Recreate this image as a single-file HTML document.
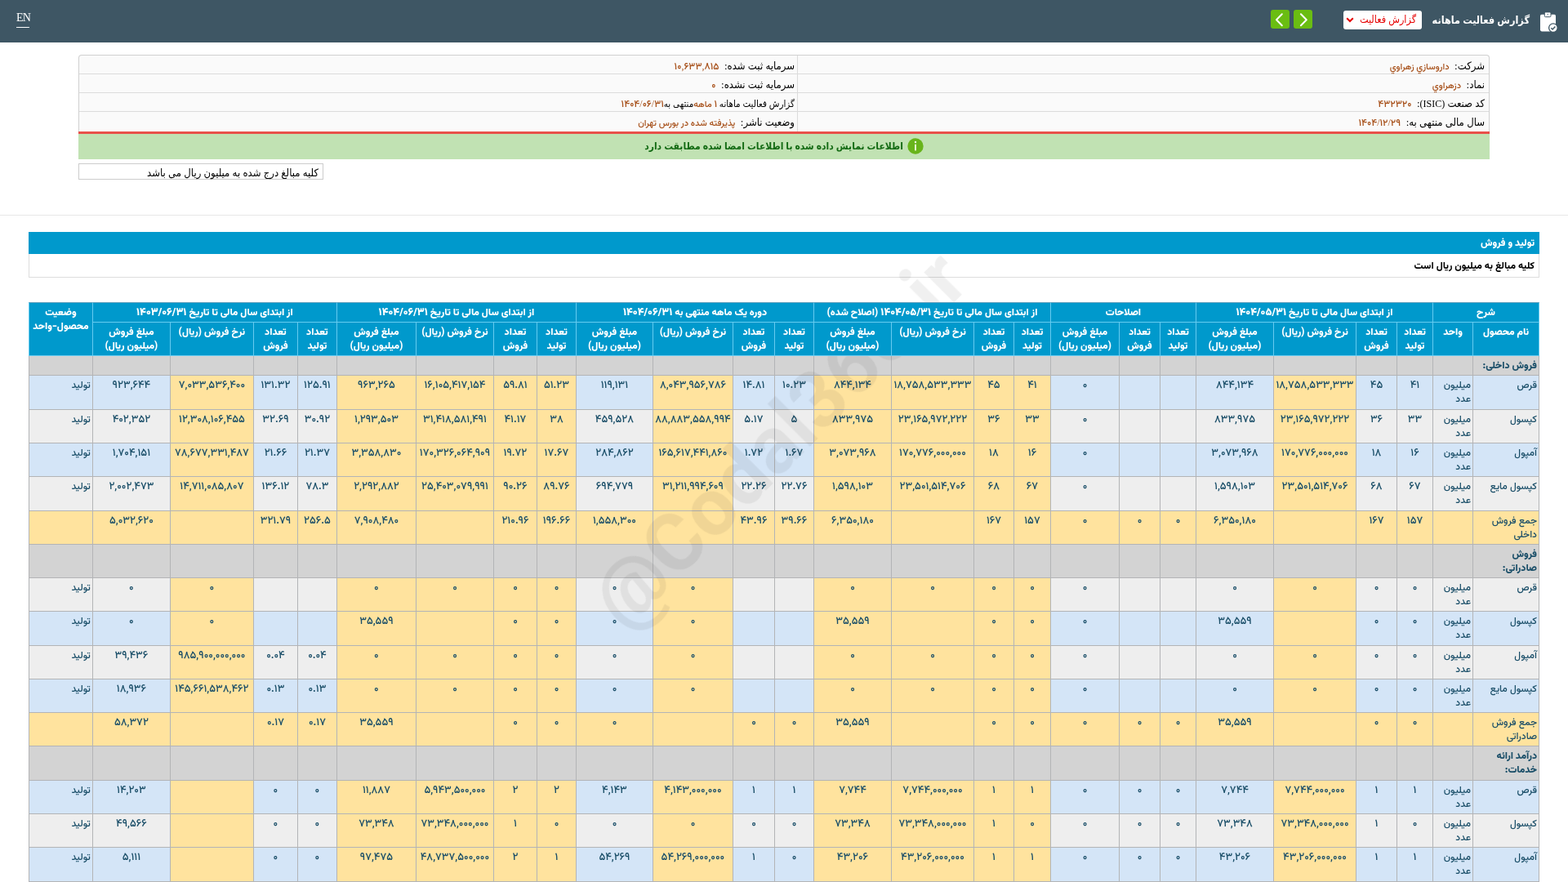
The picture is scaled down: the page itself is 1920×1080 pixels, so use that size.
<!DOCTYPE html>
<html lang="fa" dir="rtl">
<head>
<meta charset="utf-8">
<title>گزارش فعالیت ماهانه</title>
<style>
*{box-sizing:border-box}
html,body{margin:0;padding:0}
body{width:1920px;height:1080px;overflow:hidden;background:#fff;position:relative;direction:rtl;will-change:transform;
 font-family:"Liberation Serif","DejaVu Sans",serif;font-size:12px;color:#000}
.abs{position:absolute}
/* top bar */
#bar{left:0;top:0;width:1920px;height:52px;background:#3e5664}
#en{left:20px;top:12px;width:16px;height:22px;border-bottom:1px solid #fff;color:#fff;font:14px/19px "Liberation Serif",serif;letter-spacing:-0.700px;direction:ltr;text-align:left;white-space:nowrap}
#ttl{right:47px;top:13px;height:24px;line-height:24px;color:#fff;font-family:"Liberation Serif","DejaVu Sans Condensed","DejaVu Sans",sans-serif;font-weight:bold;font-size:12.6px;white-space:nowrap}
#sel{left:1645px;top:13px;width:96px;height:23px;background:#fff;border-radius:3px;color:#e60000;font-family:"Liberation Serif","DejaVu Sans Condensed","DejaVu Sans",sans-serif;font-size:12.5px;line-height:22px;padding-right:7px;white-space:nowrap}
#sel svg{position:absolute;left:3px;top:8px}
.gb{top:12px;width:23px;height:23px;border-radius:3px;background:#6abd12}
.gb svg{position:absolute;left:0;top:0}
/* info box */
#info{left:96px;top:67px;width:1728px;height:94px;border:1px solid #d0d0d0;border-bottom:none;border-radius:4px 4px 0 0;background:#fafafa}
#info .row{position:absolute;left:0;right:0;height:23px;border-bottom:1px solid #dcdcdc}
#info .c{position:absolute;top:2px;height:22px;line-height:22px;white-space:nowrap;padding-right:5px;font-family:"Liberation Serif","DejaVu Sans Condensed","DejaVu Sans",sans-serif;font-size:13px}
.la{font-size:12px}
#info .c1{right:0;width:846px}
#info .c2{right:847px;left:0;padding-right:3px}
#info .vd{position:absolute;top:0;bottom:0;right:846px;width:1px;background:#dcdcdc}
#info .s3{font-size:11.500px}
.v{color:#a8521c;font-family:"Liberation Serif","Vazirmatn","DejaVu Sans",sans-serif;font-size:11px;font-weight:500}
.v .n{font-size:12px}
#red{left:96px;top:161px;width:1728px;height:3px;background:#e8514a}
#ok{left:96px;top:164px;width:1728px;height:31px;background:#c1e2b3;text-align:center;color:#146b14;font-family:"Liberation Serif","DejaVu Sans Condensed","DejaVu Sans",sans-serif;font-weight:bold;font-size:12px;line-height:30px;white-space:nowrap}
#ok svg{vertical-align:middle;margin-left:5px;position:relative;top:-1px}
#note{left:96px;top:200px;width:300px;height:20px;border:1px solid #ccc;background:#fff;font-family:"Liberation Serif","DejaVu Sans Condensed","DejaVu Sans",sans-serif;font-size:13px;line-height:21px;padding-right:5px;white-space:nowrap}
#hr{left:0;top:263px;width:1920px;height:1px;background:#e8e8e8}
/* section title */
#st{z-index:3;left:35px;top:284px;width:1850px;height:27px;background:#0099cc;color:#fff;font-family:"Vazirmatn","DejaVu Sans",sans-serif;font-weight:900;font-size:12px;line-height:29px;padding-right:6px}
#sn{left:35px;top:311px;width:1850px;height:29px;border:1px solid #ddd;border-top:none;background:#fff;color:#000;font-family:"Vazirmatn","DejaVu Sans",sans-serif;font-weight:800;font-size:12px;line-height:30px;padding-right:5px}
/* data table */
#tw{left:35px;top:370px;width:1850px}
table.dt{border-collapse:separate;border-spacing:0;table-layout:fixed;width:1850px;direction:rtl;font-family:"Vazirmatn","DejaVu Sans",sans-serif;font-size:12px;line-height:17px;color:#1b4f69;font-weight:550}
.dt th,.dt td{white-space:nowrap;padding:4px 2px 0 2px;vertical-align:top;border:0 solid #b3b4b6;border-left-width:1px;border-bottom-width:1px;overflow:hidden}
.dt th:first-child,.dt td:first-child{border-right-width:1px}
.dt th{position:relative;z-index:3;background:#0099cc;color:#fff;font-weight:900;text-align:center;border-color:#66cbf0}
.dt tr.h1 th{height:25px;border-top:1px solid #5f9fbc;padding-top:4px}
.dt tr.h2 th{height:41px}
.dt td.nu{text-align:center;font-size:13px}
.dt td.nm,.dt td.un,.dt td.st{text-align:right}
.dt tr.sec td{background:#d3d3d3;font-weight:900}
.dt tr.odd td{background:#d4e5f7}
.dt tr.even td{background:#eeeeee}
.dt tr.sum td,.dt td.y{background:#ffe39e !important}
.n{font-size:13px}
#wm{left:961px;top:544.5px;width:0;height:0;direction:ltr;z-index:2}
#wm span{position:absolute;left:-400px;top:-80px;width:800px;height:160px;text-align:center;font:bold 98px/160px "Vazirmatn","Liberation Sans",sans-serif;color:rgba(0,0,0,0.06);transform:rotate(-45deg);white-space:nowrap}
</style>
</head>
<body>
<div id="bar" class="abs">
  <div id="en" class="abs">EN</div>
  <svg class="abs" style="left:1885px;top:14px" width="23" height="26" viewBox="0 0 23 26">
    <rect x="1" y="3.800" width="19" height="20.600" rx="1.800" fill="#fff"/>
    <rect x="6.300" y="0.900" width="7.700" height="5.800" rx="1.200" fill="#fff" stroke="#3e5664" stroke-width="1"/>
    <path d="M9.200 4.200L10.150 2.700L11.100 4.200z" fill="#3e5664"/>
    <circle cx="16.900" cy="20.100" r="5.300" fill="#fff" stroke="#3e5664" stroke-width="1.300"/>
    <path d="M14.300 20.200l1.800 1.800 3.300-3.500" fill="none" stroke="#3e5664" stroke-width="1.500"/>
  </svg>
  <div id="ttl" class="abs">گزارش فعالیت ماهانه</div>
  <div id="sel" class="abs">گزارش فعالیت<svg width="10" height="7" viewBox="0 0 10 7"><path d="M1.200 1.200L5 5l3.800-3.800" fill="none" stroke="#e60000" stroke-width="2"/></svg></div>
  <div class="gb abs" style="left:1584px"><svg width="23" height="23" viewBox="0 0 23 23"><path d="M8.900 5.200L15.800 12.250L8.900 19.300" fill="none" stroke="#fff" stroke-width="2" stroke-linecap="round" stroke-linejoin="round"/></svg></div>
  <div class="gb abs" style="left:1556px"><svg width="23" height="23" viewBox="0 0 23 23"><path d="M13.800 5.200L7 12.250L13.800 19.300" fill="none" stroke="#fff" stroke-width="2" stroke-linecap="round" stroke-linejoin="round"/></svg></div>
</div>

<div id="info" class="abs">
  <div class="vd"></div>
  <div class="row" style="top:0"><div class="c c1">شرکت:&nbsp; <span class="v">داروسازي زهراوي</span></div><div class="c c2">سرمایه ثبت شده:&nbsp; <span class="v"><span class="n">۱۰,۶۳۳,۸۱۵</span></span></div></div>
  <div class="row" style="top:23px"><div class="c c1">نماد:&nbsp; <span class="v">دزهراوي</span></div><div class="c c2">سرمایه ثبت نشده:&nbsp; <span class="v"><span class="n">۰</span></span></div></div>
  <div class="row" style="top:46px"><div class="c c1">کد صنعت <span class="la">(ISIC)</span>:&nbsp; <span class="v"><span class="n">۴۳۲۳۲۰</span></span></div><div class="c c2 s3">گزارش فعالیت ماهانه <span class="v"><span class="n">۱</span> ماهه</span>&zwnj;منتهی به<span class="v"><span class="n">۱۴۰۴/۰۶/۳۱</span></span></div></div>
  <div class="row" style="top:69px;border-bottom:none"><div class="c c1">سال مالی منتهی به:&nbsp; <span class="v"><span class="n">۱۴۰۴/۱۲/۲۹</span></span></div><div class="c c2">وضعیت ناشر:&nbsp; <span class="v">پذیرفته شده در بورس تهران</span></div></div>
</div>
<div id="red" class="abs"></div>
<div id="ok" class="abs"><svg width="20" height="20" viewBox="0 0 20 20"><circle cx="10" cy="10" r="9.700" fill="#68b41b"/><rect x="9.100" y="7.600" width="1.800" height="8" rx="0.900" fill="#f4ffe0"/><circle cx="10" cy="5" r="1.200" fill="#f4ffe0"/></svg>اطلاعات نمایش داده شده با اطلاعات امضا شده مطابقت دارد</div>
<div id="note" class="abs">کلیه مبالغ درج شده به میلیون ریال می باشد</div>
<div id="hr" class="abs"></div>

<div id="st" class="abs">تولید و فروش</div>
<div id="sn" class="abs">کلیه مبالغ به میلیون ریال است</div>

<div id="tw" class="abs">
<table class="dt" cellspacing="0" cellpadding="0">
<colgroup><col style="width:82px"><col style="width:49px"><col style="width:44px"><col style="width:50px"><col style="width:101px"><col style="width:95px"><col style="width:44px"><col style="width:50px"><col style="width:84px"><col style="width:45px"><col style="width:49px"><col style="width:101px"><col style="width:95px"><col style="width:48px"><col style="width:51px"><col style="width:98px"><col style="width:94px"><col style="width:48px"><col style="width:53px"><col style="width:95px"><col style="width:97px"><col style="width:48px"><col style="width:54px"><col style="width:102px"><col style="width:95px"><col style="width:78px"></colgroup>
<thead>
<tr class="h1"><th colspan="2">شرح</th><th colspan="4">از ابتدای سال مالی تا تاریخ <span class="n">۱۴۰۴/۰۵/۳۱</span></th><th colspan="3">اصلاحات</th><th colspan="4">از ابتدای سال مالی تا تاریخ <span class="n">۱۴۰۴/۰۵/۳۱</span> (اصلاح شده)</th><th colspan="4">دوره یک ماهه منتهی به <span class="n">۱۴۰۴/۰۶/۳۱</span></th><th colspan="4">از ابتدای سال مالی تا تاریخ <span class="n">۱۴۰۴/۰۶/۳۱</span></th><th colspan="4">از ابتدای سال مالی تا تاریخ <span class="n">۱۴۰۳/۰۶/۳۱</span></th><th rowspan="2">وضعیت<br>محصول-واحد</th></tr>
<tr class="h2"><th>نام محصول</th><th>واحد</th><th>تعداد<br>تولید</th><th>تعداد<br>فروش</th><th>نرخ فروش (ریال)</th><th>مبلغ فروش<br>(میلیون ریال)</th><th>تعداد<br>تولید</th><th>تعداد<br>فروش</th><th>مبلغ فروش<br>(میلیون ریال)</th><th>تعداد<br>تولید</th><th>تعداد<br>فروش</th><th>نرخ فروش (ریال)</th><th>مبلغ فروش<br>(میلیون ریال)</th><th>تعداد<br>تولید</th><th>تعداد<br>فروش</th><th>نرخ فروش (ریال)</th><th>مبلغ فروش<br>(میلیون ریال)</th><th>تعداد<br>تولید</th><th>تعداد<br>فروش</th><th>نرخ فروش (ریال)</th><th>مبلغ فروش<br>(میلیون ریال)</th><th>تعداد<br>تولید</th><th>تعداد<br>فروش</th><th>نرخ فروش (ریال)</th><th>مبلغ فروش<br>(میلیون ریال)</th></tr>
</thead><tbody>
<tr class="sec" style="height:24px"><td class="nm">فروش داخلی:</td><td></td><td></td><td></td><td></td><td></td><td></td><td></td><td></td><td></td><td></td><td></td><td></td><td></td><td></td><td></td><td></td><td></td><td></td><td></td><td></td><td></td><td></td><td></td><td></td><td></td></tr>
<tr class="odd" style="height:42px"><td class="nm">قرص</td><td class="un">میلیون<br>عدد</td><td class="nu">۴۱</td><td class="nu">۴۵</td><td class="nu y">۱۸,۷۵۸,۵۳۳,۳۳۳</td><td class="nu">۸۴۴,۱۳۴</td><td class="nu"></td><td class="nu"></td><td class="nu">۰</td><td class="nu y">۴۱</td><td class="nu y">۴۵</td><td class="nu y">۱۸,۷۵۸,۵۳۳,۳۳۳</td><td class="nu y">۸۴۴,۱۳۴</td><td class="nu">۱۰.۲۳</td><td class="nu">۱۴.۸۱</td><td class="nu y">۸,۰۴۳,۹۵۶,۷۸۶</td><td class="nu">۱۱۹,۱۳۱</td><td class="nu y">۵۱.۲۳</td><td class="nu y">۵۹.۸۱</td><td class="nu y">۱۶,۱۰۵,۴۱۷,۱۵۴</td><td class="nu y">۹۶۳,۲۶۵</td><td class="nu">۱۲۵.۹۱</td><td class="nu">۱۳۱.۳۲</td><td class="nu y">۷,۰۳۳,۵۳۶,۴۰۰</td><td class="nu">۹۲۳,۶۴۴</td><td class="st">تولید</td></tr>
<tr class="even" style="height:41px"><td class="nm">کپسول</td><td class="un">میلیون<br>عدد</td><td class="nu">۳۳</td><td class="nu">۳۶</td><td class="nu y">۲۳,۱۶۵,۹۷۲,۲۲۲</td><td class="nu">۸۳۳,۹۷۵</td><td class="nu"></td><td class="nu"></td><td class="nu">۰</td><td class="nu y">۳۳</td><td class="nu y">۳۶</td><td class="nu y">۲۳,۱۶۵,۹۷۲,۲۲۲</td><td class="nu y">۸۳۳,۹۷۵</td><td class="nu">۵</td><td class="nu">۵.۱۷</td><td class="nu y">۸۸,۸۸۳,۵۵۸,۹۹۴</td><td class="nu">۴۵۹,۵۲۸</td><td class="nu y">۳۸</td><td class="nu y">۴۱.۱۷</td><td class="nu y">۳۱,۴۱۸,۵۸۱,۴۹۱</td><td class="nu y">۱,۲۹۳,۵۰۳</td><td class="nu">۳۰.۹۲</td><td class="nu">۳۲.۶۹</td><td class="nu y">۱۲,۳۰۸,۱۰۶,۴۵۵</td><td class="nu">۴۰۲,۳۵۲</td><td class="st">تولید</td></tr>
<tr class="odd" style="height:41px"><td class="nm">آمپول</td><td class="un">میلیون<br>عدد</td><td class="nu">۱۶</td><td class="nu">۱۸</td><td class="nu y">۱۷۰,۷۷۶,۰۰۰,۰۰۰</td><td class="nu">۳,۰۷۳,۹۶۸</td><td class="nu"></td><td class="nu"></td><td class="nu">۰</td><td class="nu y">۱۶</td><td class="nu y">۱۸</td><td class="nu y">۱۷۰,۷۷۶,۰۰۰,۰۰۰</td><td class="nu y">۳,۰۷۳,۹۶۸</td><td class="nu">۱.۶۷</td><td class="nu">۱.۷۲</td><td class="nu y">۱۶۵,۶۱۷,۴۴۱,۸۶۰</td><td class="nu">۲۸۴,۸۶۲</td><td class="nu y">۱۷.۶۷</td><td class="nu y">۱۹.۷۲</td><td class="nu y">۱۷۰,۳۲۶,۰۶۴,۹۰۹</td><td class="nu y">۳,۳۵۸,۸۳۰</td><td class="nu">۲۱.۳۷</td><td class="nu">۲۱.۶۶</td><td class="nu y">۷۸,۶۷۷,۳۳۱,۴۸۷</td><td class="nu">۱,۷۰۴,۱۵۱</td><td class="st">تولید</td></tr>
<tr class="even" style="height:42px"><td class="nm">کپسول مایع</td><td class="un">میلیون<br>عدد</td><td class="nu">۶۷</td><td class="nu">۶۸</td><td class="nu y">۲۳,۵۰۱,۵۱۴,۷۰۶</td><td class="nu">۱,۵۹۸,۱۰۳</td><td class="nu"></td><td class="nu"></td><td class="nu">۰</td><td class="nu y">۶۷</td><td class="nu y">۶۸</td><td class="nu y">۲۳,۵۰۱,۵۱۴,۷۰۶</td><td class="nu y">۱,۵۹۸,۱۰۳</td><td class="nu">۲۲.۷۶</td><td class="nu">۲۲.۲۶</td><td class="nu y">۳۱,۲۱۱,۹۹۴,۶۰۹</td><td class="nu">۶۹۴,۷۷۹</td><td class="nu y">۸۹.۷۶</td><td class="nu y">۹۰.۲۶</td><td class="nu y">۲۵,۴۰۳,۰۷۹,۹۹۱</td><td class="nu y">۲,۲۹۲,۸۸۲</td><td class="nu">۷۸.۳</td><td class="nu">۱۳۶.۱۲</td><td class="nu y">۱۴,۷۱۱,۰۸۵,۸۰۷</td><td class="nu">۲,۰۰۲,۴۷۳</td><td class="st">تولید</td></tr>
<tr class="sum" style="height:41px"><td class="nm">جمع فروش<br>داخلی</td><td class="un"></td><td class="nu">۱۵۷</td><td class="nu">۱۶۷</td><td class="nu"></td><td class="nu">۶,۳۵۰,۱۸۰</td><td class="nu">۰</td><td class="nu">۰</td><td class="nu">۰</td><td class="nu">۱۵۷</td><td class="nu">۱۶۷</td><td class="nu"></td><td class="nu">۶,۳۵۰,۱۸۰</td><td class="nu">۳۹.۶۶</td><td class="nu">۴۳.۹۶</td><td class="nu"></td><td class="nu">۱,۵۵۸,۳۰۰</td><td class="nu">۱۹۶.۶۶</td><td class="nu">۲۱۰.۹۶</td><td class="nu"></td><td class="nu">۷,۹۰۸,۴۸۰</td><td class="nu">۲۵۶.۵</td><td class="nu">۳۲۱.۷۹</td><td class="nu"></td><td class="nu">۵,۰۳۲,۶۲۰</td><td class="st"></td></tr>
<tr class="sec" style="height:41px"><td class="nm">فروش<br>صادراتی:</td><td></td><td></td><td></td><td></td><td></td><td></td><td></td><td></td><td></td><td></td><td></td><td></td><td></td><td></td><td></td><td></td><td></td><td></td><td></td><td></td><td></td><td></td><td></td><td></td><td></td></tr>
<tr class="even" style="height:41px"><td class="nm">قرص</td><td class="un">میلیون<br>عدد</td><td class="nu">۰</td><td class="nu">۰</td><td class="nu y">۰</td><td class="nu">۰</td><td class="nu"></td><td class="nu"></td><td class="nu">۰</td><td class="nu y">۰</td><td class="nu y">۰</td><td class="nu y">۰</td><td class="nu y">۰</td><td class="nu"></td><td class="nu"></td><td class="nu y">۰</td><td class="nu">۰</td><td class="nu y">۰</td><td class="nu y">۰</td><td class="nu y">۰</td><td class="nu y">۰</td><td class="nu"></td><td class="nu"></td><td class="nu y">۰</td><td class="nu">۰</td><td class="st">تولید</td></tr>
<tr class="odd" style="height:42px"><td class="nm">کپسول</td><td class="un">میلیون<br>عدد</td><td class="nu">۰</td><td class="nu">۰</td><td class="nu y"></td><td class="nu">۳۵,۵۵۹</td><td class="nu"></td><td class="nu"></td><td class="nu">۰</td><td class="nu y">۰</td><td class="nu y">۰</td><td class="nu y"></td><td class="nu y">۳۵,۵۵۹</td><td class="nu"></td><td class="nu"></td><td class="nu y">۰</td><td class="nu">۰</td><td class="nu y">۰</td><td class="nu y">۰</td><td class="nu y"></td><td class="nu y">۳۵,۵۵۹</td><td class="nu"></td><td class="nu"></td><td class="nu y">۰</td><td class="nu">۰</td><td class="st">تولید</td></tr>
<tr class="even" style="height:41px"><td class="nm">آمپول</td><td class="un">میلیون<br>عدد</td><td class="nu">۰</td><td class="nu">۰</td><td class="nu y">۰</td><td class="nu">۰</td><td class="nu"></td><td class="nu"></td><td class="nu">۰</td><td class="nu y">۰</td><td class="nu y">۰</td><td class="nu y">۰</td><td class="nu y">۰</td><td class="nu"></td><td class="nu"></td><td class="nu y">۰</td><td class="nu">۰</td><td class="nu y">۰</td><td class="nu y">۰</td><td class="nu y">۰</td><td class="nu y">۰</td><td class="nu">۰.۰۴</td><td class="nu">۰.۰۴</td><td class="nu y">۹۸۵,۹۰۰,۰۰۰,۰۰۰</td><td class="nu">۳۹,۴۳۶</td><td class="st">تولید</td></tr>
<tr class="odd" style="height:41px"><td class="nm">کپسول مایع</td><td class="un">میلیون<br>عدد</td><td class="nu">۰</td><td class="nu">۰</td><td class="nu y">۰</td><td class="nu">۰</td><td class="nu"></td><td class="nu"></td><td class="nu">۰</td><td class="nu y">۰</td><td class="nu y">۰</td><td class="nu y">۰</td><td class="nu y">۰</td><td class="nu"></td><td class="nu"></td><td class="nu y">۰</td><td class="nu">۰</td><td class="nu y">۰</td><td class="nu y">۰</td><td class="nu y">۰</td><td class="nu y">۰</td><td class="nu">۰.۱۳</td><td class="nu">۰.۱۳</td><td class="nu y">۱۴۵,۶۶۱,۵۳۸,۴۶۲</td><td class="nu">۱۸,۹۳۶</td><td class="st">تولید</td></tr>
<tr class="sum" style="height:41px"><td class="nm">جمع فروش<br>صادراتی</td><td class="un"></td><td class="nu">۰</td><td class="nu">۰</td><td class="nu"></td><td class="nu">۳۵,۵۵۹</td><td class="nu">۰</td><td class="nu">۰</td><td class="nu">۰</td><td class="nu">۰</td><td class="nu">۰</td><td class="nu"></td><td class="nu">۳۵,۵۵۹</td><td class="nu">۰</td><td class="nu">۰</td><td class="nu"></td><td class="nu">۰</td><td class="nu">۰</td><td class="nu">۰</td><td class="nu"></td><td class="nu">۳۵,۵۵۹</td><td class="nu">۰.۱۷</td><td class="nu">۰.۱۷</td><td class="nu"></td><td class="nu">۵۸,۳۷۲</td><td class="st"></td></tr>
<tr class="sec" style="height:42px"><td class="nm">درآمد ارائه<br>خدمات:</td><td></td><td></td><td></td><td></td><td></td><td></td><td></td><td></td><td></td><td></td><td></td><td></td><td></td><td></td><td></td><td></td><td></td><td></td><td></td><td></td><td></td><td></td><td></td><td></td><td></td></tr>
<tr class="odd" style="height:41px"><td class="nm">قرص</td><td class="un">میلیون<br>عدد</td><td class="nu">۱</td><td class="nu">۱</td><td class="nu y">۷,۷۴۴,۰۰۰,۰۰۰</td><td class="nu">۷,۷۴۴</td><td class="nu">۰</td><td class="nu">۰</td><td class="nu">۰</td><td class="nu y">۱</td><td class="nu y">۱</td><td class="nu y">۷,۷۴۴,۰۰۰,۰۰۰</td><td class="nu y">۷,۷۴۴</td><td class="nu">۱</td><td class="nu">۱</td><td class="nu y">۴,۱۴۳,۰۰۰,۰۰۰</td><td class="nu">۴,۱۴۳</td><td class="nu y">۲</td><td class="nu y">۲</td><td class="nu y">۵,۹۴۳,۵۰۰,۰۰۰</td><td class="nu y">۱۱,۸۸۷</td><td class="nu">۰</td><td class="nu">۰</td><td class="nu y"></td><td class="nu">۱۴,۲۰۳</td><td class="st">تولید</td></tr>
<tr class="even" style="height:41px"><td class="nm">کپسول</td><td class="un">میلیون<br>عدد</td><td class="nu">۰</td><td class="nu">۱</td><td class="nu y">۷۳,۳۴۸,۰۰۰,۰۰۰</td><td class="nu">۷۳,۳۴۸</td><td class="nu">۰</td><td class="nu">۰</td><td class="nu">۰</td><td class="nu y">۰</td><td class="nu y">۱</td><td class="nu y">۷۳,۳۴۸,۰۰۰,۰۰۰</td><td class="nu y">۷۳,۳۴۸</td><td class="nu">۰</td><td class="nu">۰</td><td class="nu y">۰</td><td class="nu">۰</td><td class="nu y">۰</td><td class="nu y">۱</td><td class="nu y">۷۳,۳۴۸,۰۰۰,۰۰۰</td><td class="nu y">۷۳,۳۴۸</td><td class="nu">۰</td><td class="nu">۰</td><td class="nu y"></td><td class="nu">۴۹,۵۶۶</td><td class="st">تولید</td></tr>
<tr class="odd" style="height:42px"><td class="nm">آمپول</td><td class="un">میلیون<br>عدد</td><td class="nu">۱</td><td class="nu">۱</td><td class="nu y">۴۳,۲۰۶,۰۰۰,۰۰۰</td><td class="nu">۴۳,۲۰۶</td><td class="nu">۰</td><td class="nu">۰</td><td class="nu">۰</td><td class="nu y">۱</td><td class="nu y">۱</td><td class="nu y">۴۳,۲۰۶,۰۰۰,۰۰۰</td><td class="nu y">۴۳,۲۰۶</td><td class="nu">۰</td><td class="nu">۱</td><td class="nu y">۵۴,۲۶۹,۰۰۰,۰۰۰</td><td class="nu">۵۴,۲۶۹</td><td class="nu y">۱</td><td class="nu y">۲</td><td class="nu y">۴۸,۷۳۷,۵۰۰,۰۰۰</td><td class="nu y">۹۷,۴۷۵</td><td class="nu">۰</td><td class="nu">۰</td><td class="nu y"></td><td class="nu">۵,۱۱۱</td><td class="st">تولید</td></tr>
</tbody></table>
</div>
<div id="wm" class="abs"><span>@Codal360.ir</span></div>
</body>
</html>
